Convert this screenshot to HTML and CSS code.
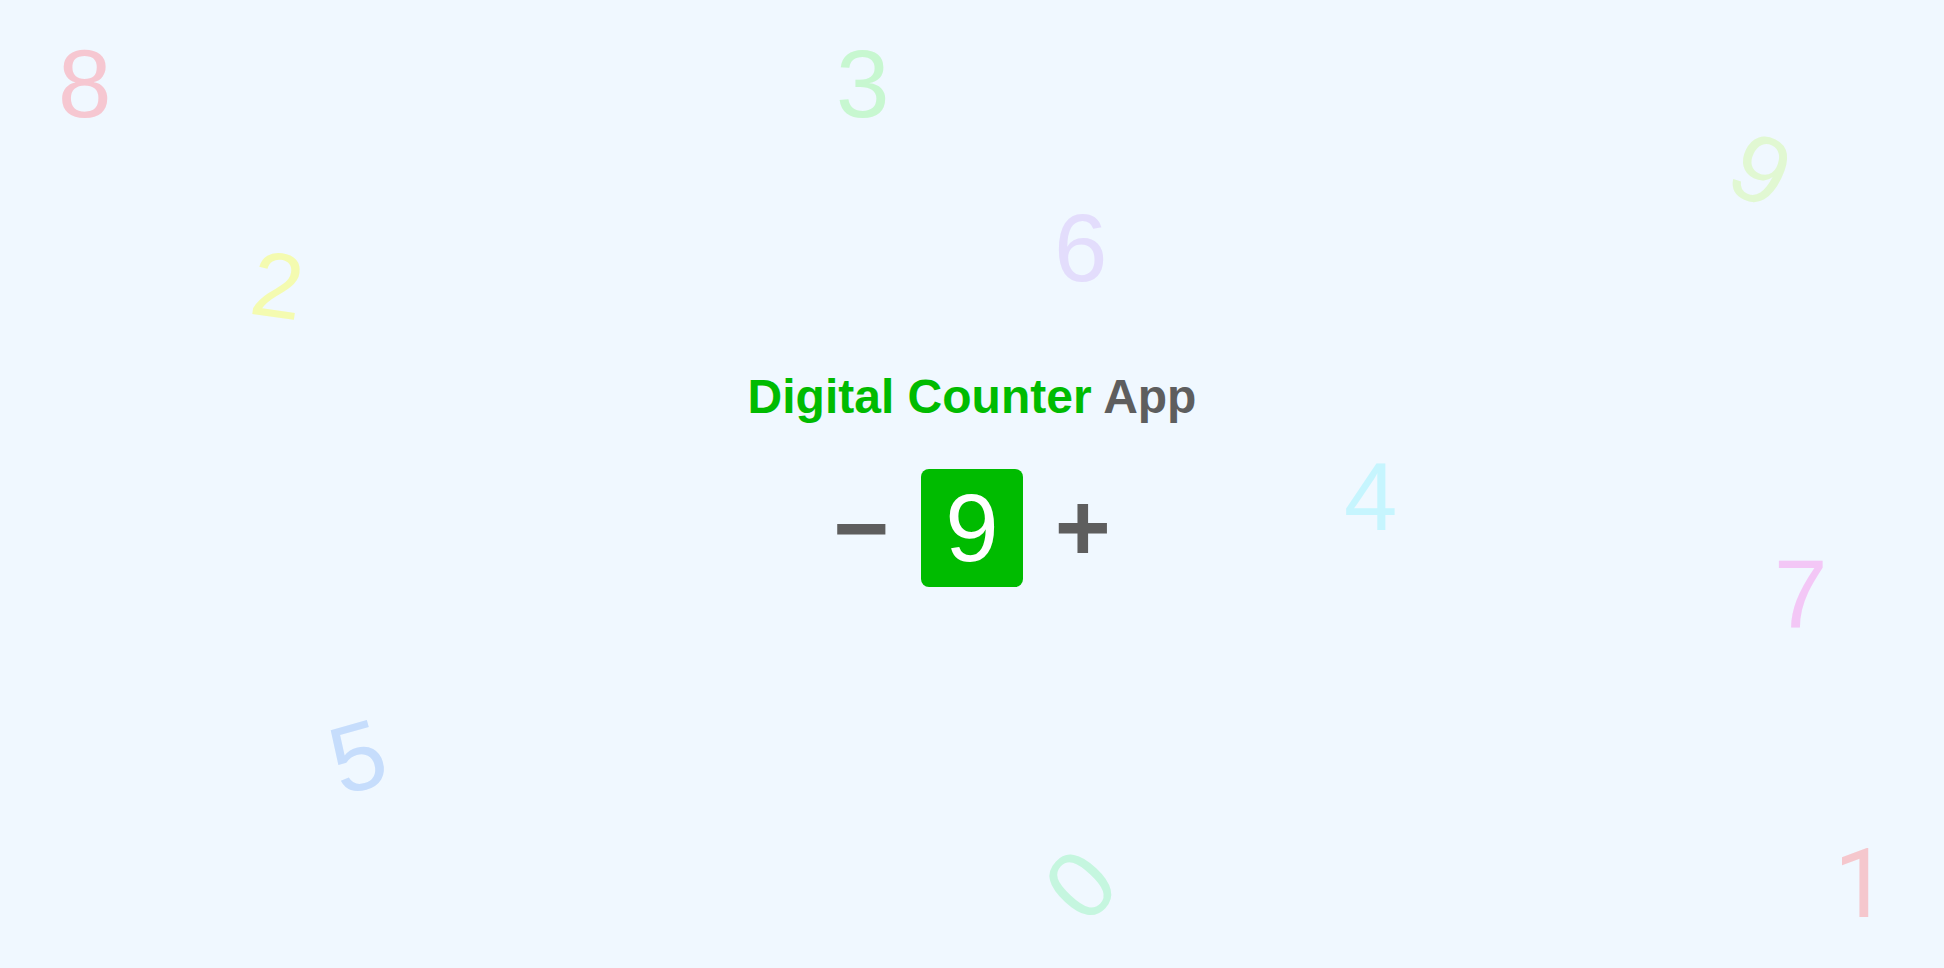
FILE: index.html
```html
<!DOCTYPE html>
<html lang="en">
<head>
<meta charset="utf-8">
<title>Digital Counter App</title>
<link rel="stylesheet" href="styles.css">
</head>
<body>
  <div class="bg-digits" aria-hidden="true">
    <span class="digit d8">8</span>
    <span class="digit d3">3</span>
    <span class="digit d9">9</span>
    <span class="digit d2">2</span>
    <span class="digit d6">6</span>
    <span class="digit d4">4</span>
    <span class="digit d7">7</span>
    <span class="digit d5">5</span>
    <span class="digit d0">0</span>
    <span class="digit d1">1</span>
  </div>
  <main class="app">
    <h1 class="title"><span class="title-accent">Digital Counter</span> <span class="title-rest">App</span></h1>
    <div class="counter">
      <button class="counter-btn" type="button">&minus;</button>
      <div class="counter-value">9</div>
      <button class="counter-btn" type="button">+</button>
    </div>
  </main>
</body>
</html>
```

FILE: styles.css
```css
html, body {
  margin: 0;
  padding: 0;
  height: 100%;
}

body {
  background: #f0f8ff;
  font-family: "Liberation Sans", Arial, sans-serif;
  overflow: hidden;
  position: relative;
}

.bg-digits {
  position: absolute;
  inset: 0;
  pointer-events: none;
}

.digit {
  position: absolute;
  display: block;
  width: 0.556em;
  text-align: center;
  font-size: 96px;
  line-height: 1;
  font-weight: 400;
}

.d8 { left: 58px; top: 36px; color: #f6c7d1; }
.d3 { left: 836px; top: 36px; color: #c7f7d0; }
.d6 { left: 1054px; top: 200px; color: #e3ddfc; }
.d4 { left: 1344px; top: 449px; color: #c6f5fe; }
.d7 { left: 1774px; top: 546px; color: #f3c7f6; }

.d1 {
  font-family: Roboto, "Liberation Sans", sans-serif;
  left: 1834px;
  top: 836px;
  color: #f5c7cd;
}

.d2 {
  font-size: 92px;
  left: 252px;
  top: 239px;
  color: #f4fbb0;
  transform: rotate(8deg);
}

.d5 {
  left: 331px;
  top: 709px;
  color: #c6ddfc;
  transform: rotate(-16deg);
}

.d0 {
  left: 1054px;
  top: 837px;
  color: #c5f6df;
  transform: rotate(-47deg);
}

.d9 {
  left: 1734px;
  top: 122px;
  color: #e1f8d2;
  transform: rotate(26deg);
}

.app {
  position: relative;
  box-sizing: border-box;
  height: 100%;
  padding-bottom: 12px;
  display: flex;
  flex-direction: column;
  align-items: center;
  justify-content: center;
}

.title {
  margin: 0;
  font-size: 48px;
  font-weight: 700;
  line-height: normal;
}

.title-accent {
  color: #00bb00;
}

.title-rest {
  color: #5e5e5e;
}

.counter {
  margin-top: 45px;
  display: flex;
  align-items: center;
  gap: 32px;
}

.counter-btn {
  background: none;
  border: 0;
  padding: 0;
  margin: 0;
  font-family: "Liberation Sans", Arial, sans-serif;
  font-size: 96px;
  font-weight: 700;
  line-height: normal;
  color: #5e5e5e;
  cursor: pointer;
}

.counter-value {
  background: #00bb00;
  color: #ffffff;
  font-size: 96px;
  font-weight: 400;
  line-height: normal;
  padding: 4px 24px;
  border-radius: 8px;
}
```
